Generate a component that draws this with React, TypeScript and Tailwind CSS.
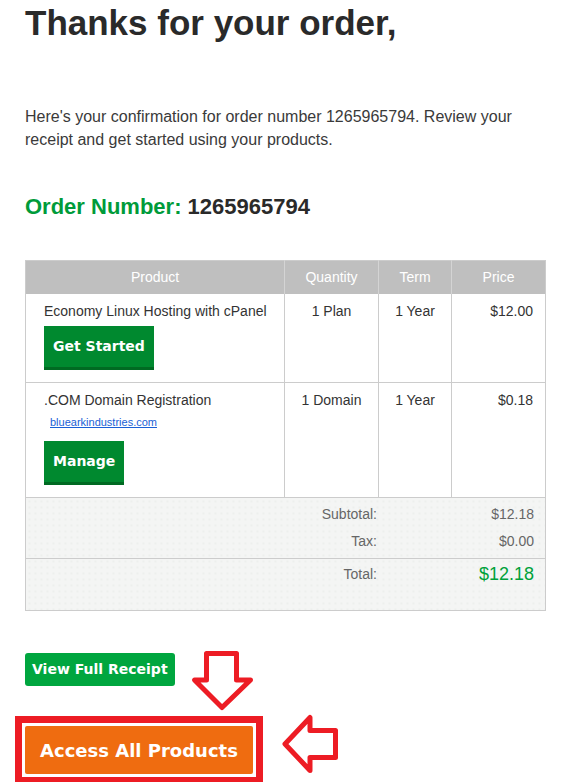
const items = [
  { name: "Economy Linux Hosting with cPanel", qty: "1 Plan", term: "1 Year", price: "$12.00", button: "Get Started" },
  { name: ".COM Domain Registration", domain: "bluearkindustries.com", qty: "1 Domain", term: "1 Year", price: "$0.18", button: "Manage" },
];

const btnFont = "font-['DejaVu_Sans',Verdana,sans-serif] font-bold";

const DownArrow = () => (
  <svg width="68" height="66" viewBox="0 0 68 66" className="absolute left-[164px] top-[37px]">
    <path d="M17.5 5.5 H47.5 V32 H61.5 L33 59.5 L5.5 32 H17.5 Z" fill="none" stroke="#ed1c24" strokeWidth="5" strokeLinejoin="round" />
  </svg>
);

const LeftArrow = () => (
  <svg width="64" height="66" viewBox="0 0 64 66" className="absolute left-[253px] top-[100px]">
    <path d="M7 33 L32 6.5 V19.5 H57.5 V46.5 H32 V59.5 Z" fill="none" stroke="#ed1c24" strokeWidth="5" strokeLinejoin="round" />
  </svg>
);

export default function App() {
  return (
    <div className="min-h-[782px] bg-white font-['Liberation_Sans',Arial,sans-serif] px-[25px] pt-[2px]">
      <div className="w-[520px]">
        <h1 className="text-[35px] leading-[42px] font-bold text-[#2a2a2a]">Thanks for your order,</h1>

        <p className="mt-[61px] max-w-[490px] text-[16px] leading-[23px] text-[#3a3a3a]">
          Here's your confirmation for order number 1265965794. Review your receipt and get started using your products.
        </p>

        <div className="mt-[42px] text-[22px] leading-[28px] font-bold">
          <span className="text-[#009b3a]">Order Number:</span> <span className="text-[#2a2a2a]">1265965794</span>
        </div>

        <table className="mt-[39px] w-[520px] table-fixed border-collapse border border-[#cccccc] text-[14px] text-[#333]">
          <colgroup>
            <col className="w-[259px]" />
            <col className="w-[94px]" />
            <col className="w-[73px]" />
            <col className="w-[94px]" />
          </colgroup>
          <thead>
            <tr className="bg-[#bfbfbf] text-white">
              <th className="font-normal py-[8px] leading-[17px] border-r border-[#d4d4d4]">Product</th>
              <th className="font-normal py-[8px] leading-[17px] border-r border-[#d4d4d4]">Quantity</th>
              <th className="font-normal py-[8px] leading-[17px] border-r border-[#d4d4d4]">Term</th>
              <th className="font-normal py-[8px] leading-[17px]">Price</th>
            </tr>
          </thead>
          <tbody>
            {items.map((item) => (
              <tr key={item.name} className="align-top border-b border-[#cccccc]">
                <td className="pl-[18px] pt-[9px] pb-[12px] border-r border-[#cccccc]">
                  <div className="leading-4">{item.name}</div>
                  {item.domain && (
                    <div className="mt-[8px] ml-[6px] text-[11px] leading-[13px] text-[#1a5fd6] underline">{item.domain}</div>
                  )}
                  <div
                    className={`${btnFont} ${item.domain ? "mt-[12px]" : "mt-[7px]"} inline-flex h-[44px] items-center px-[9px] bg-[#00892f] border-b-[3px] border-[#006a22] text-white text-[14px]`}
                  >
                    {item.button}
                  </div>
                </td>
                <td className="pt-[9px] leading-4 text-center border-r border-[#cccccc]">{item.qty}</td>
                <td className="pt-[9px] leading-4 text-center border-r border-[#cccccc]">{item.term}</td>
                <td className="pt-[9px] leading-4 text-right pr-[12px]">{item.price}</td>
              </tr>
            ))}
            <tr>
              <td colSpan={4} className="p-0 bg-[#f4f5f4] bg-[radial-gradient(circle,#e9ece9_0.6px,transparent_0.9px)] bg-[length:6px_6px] text-[#666]">
                <div className="grid grid-cols-[351px_1fr] pt-[8px]">
                  <div className="text-right leading-4">Subtotal:</div>
                  <div className="text-right leading-4 pr-[11px]">$12.18</div>
                  <div className="text-right leading-4 mt-[11px]">Tax:</div>
                  <div className="text-right leading-4 mt-[11px] pr-[11px]">$0.00</div>
                </div>
                <div className="mt-[9px] border-t border-[#cccccc] grid grid-cols-[351px_1fr] items-center pt-[3px] pb-[24px]">
                  <div className="text-right leading-6">Total:</div>
                  <div className="text-right leading-6 pr-[11px] text-[18px] text-[#00a13a]">$12.18</div>
                </div>
              </td>
            </tr>
          </tbody>
        </table>

        <div className="relative pt-[42px]">
          <div className={`${btnFont} inline-flex h-[33px] items-center px-[7px] rounded-[3px] bg-[#00a63f] text-white text-[14px]`}>
            View Full Receipt
          </div>
          <DownArrow />
          <div className="mt-[30px] -ml-[10px] w-fit border-[7px] border-[#ed1c24] p-[3px] bg-white">
            <div className={`${btnFont} flex h-[48px] w-[228px] items-center justify-center rounded-[2px] bg-[#ef6c10] text-white text-[18px]`}>
              Access All Products
            </div>
          </div>
          <LeftArrow />
        </div>
      </div>
    </div>
  );
}
